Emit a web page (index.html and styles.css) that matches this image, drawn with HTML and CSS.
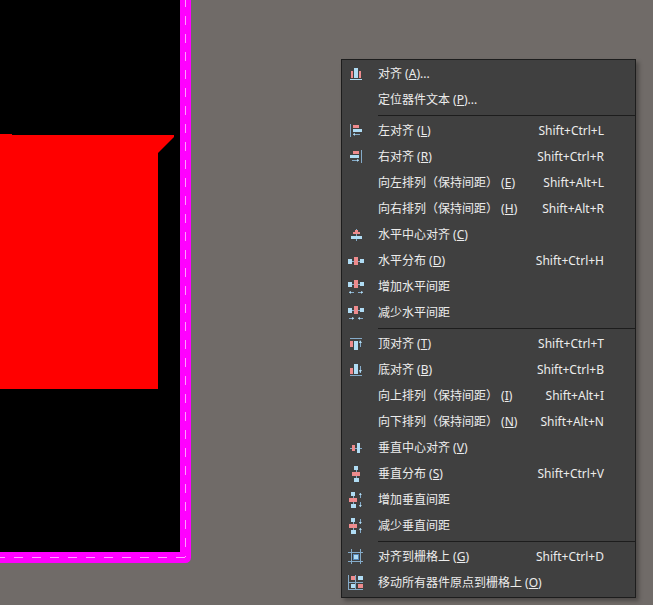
FILE: index.html
```
<!DOCTYPE html>
<html lang="zh-CN">
<head>
<meta charset="utf-8">
<title>PCB</title>
<link rel="stylesheet" href="styles.css">
</head>
<body>
<main class="workspace">
<svg class="board" width="200" height="570" viewBox="0 0 200 570" aria-hidden="true">
<path fill="#000" d="M0 0h182v554H0z"/>
<path fill="none" stroke="#f0f" stroke-width="11" stroke-linejoin="round" d="M185.500-10V557.500H-10"/>
<path fill="none" stroke="#ff9cff" stroke-dasharray="9 9" stroke-dashoffset="2" d="M185.500 0V557"/>
<path fill="none" stroke="#ff9cff" stroke-dasharray="9 9" d="M185 557.500H0"/>
<path fill="#f00" d="M0 134h12v1h162v2l-16 16v236H0z"/>
</svg>
<menu class="menu">
<li><button class="item"><svg class="icon" viewBox="0 0 16 16"><path class="r" d="M3 5h2v7H3zM11 5h2v7h-2z"/><path class="b" d="M6 2h4v10H6zM2 13h12v1H2z"/></svg><span class="label">对齐 (<u>A</u>)...</span></button></li>
<li><button class="item"><span class="icon"></span><span class="label">定位器件文本 (<u>P</u>)...</span></button></li>
<li class="separator"></li>
<li><button class="item"><svg class="icon" viewBox="0 0 16 16"><path class="d" d="M2 1h1v13H2zM5 11h7v1H5z"/><path class="r" d="M5 2h6v3H5z"/><path class="b" d="M5 6h9v3H5zM5 11l2-1v3z"/></svg><span class="label">左对齐 (<u>L</u>)</span><kbd>Shift+Ctrl+L</kbd></button></li>
<li><button class="item"><svg class="icon" viewBox="0 0 16 16"><path class="d" d="M13 1h1v13h-1zM4 11h7v1H4z"/><path class="r" d="M5 2h6v3H5z"/><path class="b" d="M2 6h9v3H2zM11 11l-2-1v3z"/></svg><span class="label">右对齐 (<u>R</u>)</span><kbd>Shift+Ctrl+R</kbd></button></li>
<li><button class="item"><span class="icon"></span><span class="label">向左排列（保持间距） (<u>E</u>)</span><kbd>Shift+Alt+L</kbd></button></li>
<li><button class="item"><span class="icon"></span><span class="label">向右排列（保持间距） (<u>H</u>)</span><kbd>Shift+Alt+R</kbd></button></li>
<li><button class="item"><svg class="icon" viewBox="0 0 16 16"><path class="d" d="M8 2h1v12H8z"/><path class="r" d="M5 5h7v2H5zM7 3h3v2H7z"/><path class="b" d="M3 9h11v3H3z"/></svg><span class="label">水平中心对齐 (<u>C</u>)</span></button></li>
<li><button class="item"><svg class="icon" viewBox="0 0 16 16"><path class="d" d="M0 8h16v1H0z"/><path class="b" d="M0 6h4v5H0zM12 6h4v4h-4z"/><path class="r" d="M6 4h4v8H6z"/></svg><span class="label">水平分布 (<u>D</u>)</span><kbd>Shift+Ctrl+H</kbd></button></li>
<li><button class="item"><svg class="icon" viewBox="0 0 16 16"><path class="d" d="M0 5h16v1H0zM1 13h5v1H1zM10 13h5v1h-5z"/><path class="b" d="M0 3h4v5H0zM12 3h4v4h-4zM1 13l2-1v3zM15 13l-2-1v3z"/><path class="r" d="M6 1h4v8H6z"/></svg><span class="label">增加水平间距</span></button></li>
<li><button class="item"><svg class="icon" viewBox="0 0 16 16"><path class="d" d="M0 5h16v1H0zM1 13h5v1H1zM10 13h5v1h-5z"/><path class="b" d="M0 3h4v5H0zM12 3h4v4h-4zM6 13l-2-1v3zM10 13l2-1v3z"/><path class="r" d="M6 1h4v8H6z"/></svg><span class="label">减少水平间距</span></button></li>
<li class="separator"></li>
<li><button class="item"><svg class="icon" viewBox="0 0 16 16"><path class="d" d="M2 2h12v1H2zM12 5h1v6h-1z"/><path class="r" d="M2 5h3v6H2z"/><path class="b" d="M6 5h4v9H6zM12 4l-1 3h3z"/></svg><span class="label">顶对齐 (<u>T</u>)</span><kbd>Shift+Ctrl+T</kbd></button></li>
<li><button class="item"><svg class="icon" viewBox="0 0 16 16"><path class="d" d="M2 13h12v1H2zM12 4h1v7h-1z"/><path class="r" d="M2 6h3v6H2z"/><path class="b" d="M6 2h4v10H6zM12 11l-1-3h3z"/></svg><span class="label">底对齐 (<u>B</u>)</span><kbd>Shift+Ctrl+B</kbd></button></li>
<li><button class="item"><span class="icon"></span><span class="label">向上排列（保持间距） (<u>I</u>)</span><kbd>Shift+Alt+I</kbd></button></li>
<li><button class="item"><span class="icon"></span><span class="label">向下排列（保持间距） (<u>N</u>)</span><kbd>Shift+Alt+N</kbd></button></li>
<li><button class="item"><svg class="icon" viewBox="0 0 16 16"><path class="d" d="M2 8h12v1H2z"/><path class="r" d="M4 5h3v6H4z"/><path class="b" d="M9 3h3v10H9z"/></svg><span class="label">垂直中心对齐 (<u>V</u>)</span></button></li>
<li><button class="item"><svg class="icon" viewBox="0 0 16 16"><path class="d" d="M8 0h1v16H8z"/><path class="b" d="M6 0h4v4H6zM6 12h5v4H6z"/><path class="r" d="M4 6h8v4H4z"/></svg><span class="label">垂直分布 (<u>S</u>)</span><kbd>Shift+Ctrl+V</kbd></button></li>
<li><button class="item"><svg class="icon" viewBox="0 0 16 16"><path class="d" d="M5 0h1v16H5zM12 1h1v5h-1zM12 10h1v5h-1z"/><path class="b" d="M3 0h4v4H3zM3 12h5v4H3zM12 1l-1 2h3zM12 15l-1-2h3z"/><path class="r" d="M1 6h8v4H1z"/></svg><span class="label">增加垂直间距</span></button></li>
<li><button class="item"><svg class="icon" viewBox="0 0 16 16"><path class="d" d="M5 0h1v16H5zM12 1h1v5h-1zM12 10h1v5h-1z"/><path class="b" d="M3 0h4v4H3zM3 12h5v4H3zM12 6l-1-2h3zM12 10l-1 2h3z"/><path class="r" d="M1 6h8v4H1z"/></svg><span class="label">减少垂直间距</span></button></li>
<li class="separator"></li>
<li><button class="item"><svg class="icon" viewBox="0 0 16 16"><path class="d" d="M3 0h1v15H3zM12 0h1v15h-1zM0 3h15v1H0zM0 12h15v1H0z"/><path class="s" d="M5 5h6v6H5z"/><path class="b" d="M6 6h4v4H6z"/></svg><span class="label">对齐到栅格上 (<u>G</u>)</span><kbd>Shift+Ctrl+D</kbd></button></li>
<li><button class="item"><svg class="icon" viewBox="0 0 16 16"><path class="d" d="M0 0h1v15H0zM7 0h1v15H7zM0 7h15v1H0zM0 14h15v1H0z"/><path class="r" d="M3 1h4v4H3zM10 9h5v4h-5z"/><path class="b" d="M10 1h5v4h-5zM3 9h4v4H3z"/></svg><span class="label">移动所有器件原点到栅格上 (<u>O</u>)</span></button></li>
</menu>
</main>
</body>
</html>
```
FILE: styles.css
```
body {
  margin: 0;
  background: #706b68;
}

.workspace {
  position: relative;
  min-height: 100vh;
  overflow: hidden;
}

.board {
  display: block;
}

/* Context menu floating over the board canvas */
.menu {
  position: absolute;
  top: 59px;
  right: 17px;
  min-width: 293px;
  margin: 0;
  padding: 1px 0;
  list-style: none;
  background: #404040;
  border: 1px solid #1d1d1d;
  box-shadow: 3px 3px 4px rgba(0, 0, 0, 0.3);
}

.item {
  display: flex;
  align-items: center;
  width: 100%;
  height: 26px;
  padding: 0 31px 0 6px;
  border: 0;
  background: none;
  color: #ececec;
  font: 12px/18px "Noto Sans", "Noto Sans CJK SC", sans-serif;
  text-align: left;
  white-space: nowrap;
}

.item:hover {
  background: #505050;
}

.icon {
  flex: none;
  width: 16px;
  height: 16px;
  margin-right: 14px;
}

.label {
  flex: 1;
}

.label u {
  text-underline-offset: 1px;
}

kbd {
  font: inherit;
}

.separator {
  height: 1px;
  margin: 2px 0 2px 36px;
  background: #1d1d1d;
}

.r {
  fill: #ee8b8d;
}

.b {
  fill: #b0dcf4;
}

.d {
  fill: #85abc9;
}

.s {
  fill: #5589bd;
}
```
